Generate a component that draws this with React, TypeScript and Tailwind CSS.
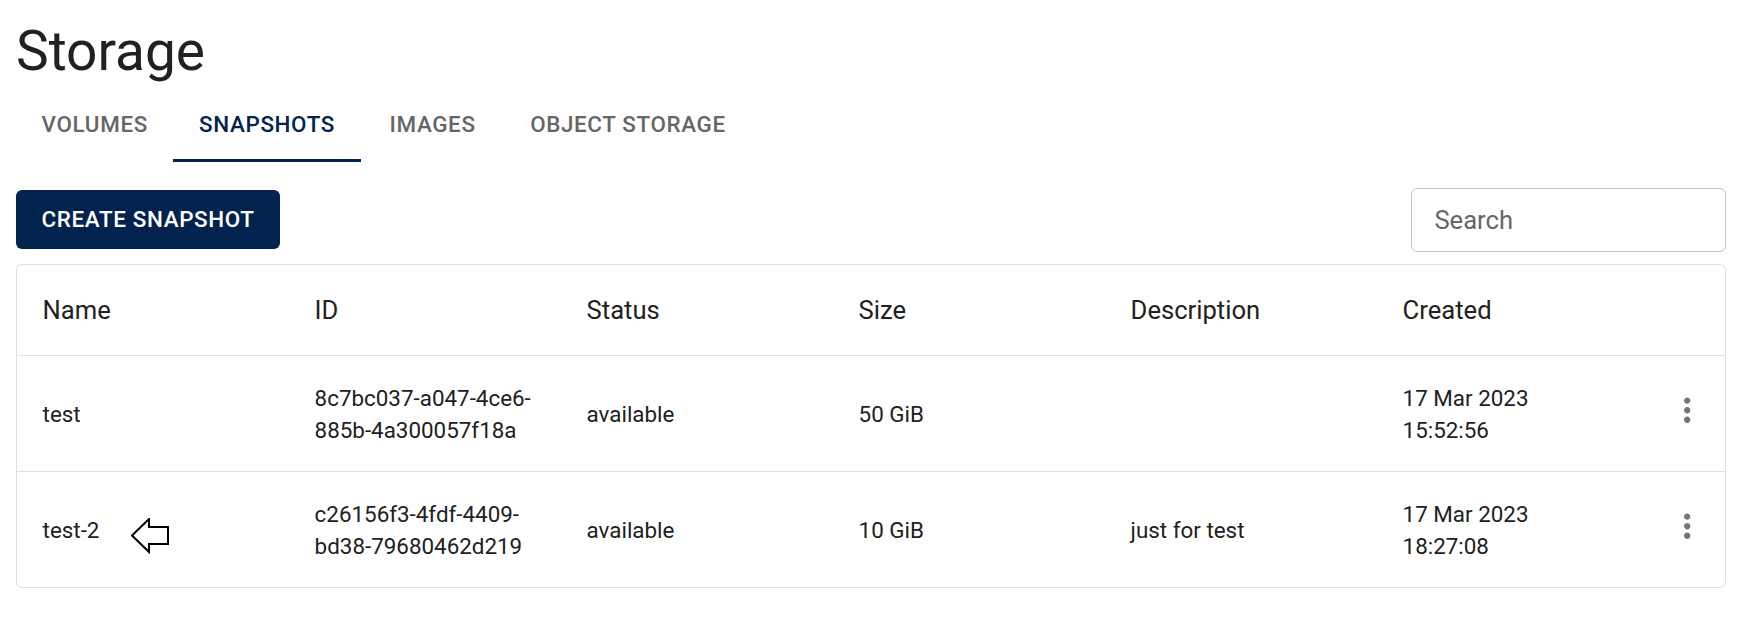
import React, { useState } from 'react';

type Snapshot = {
  name: string;
  id: [string, string];
  status: string;
  size: string;
  description: string;
  created: [string, string];
  marked?: boolean;
};

const tabs = ['Volumes', 'Snapshots', 'Images', 'Object Storage'];

const snapshots: Snapshot[] = [
  {
    name: 'test',
    id: ['8c7bc037-a047-4ce6-', '885b-4a300057f18a'],
    status: 'available',
    size: '50 GiB',
    description: '',
    created: ['17 Mar 2023', '15:52:56'],
  },
  {
    name: 'test-2',
    id: ['c26156f3-4fdf-4409-', 'bd38-79680462d219'],
    status: 'available',
    size: '10 GiB',
    description: 'just for test',
    created: ['17 Mar 2023', '18:27:08'],
    marked: true,
  },
];

function MoreVertIcon() {
  return (
    <svg viewBox="0 0 24 24" className="w-[38.4px] h-[38.4px] fill-[#757575]">
      <path d="M12 8c1.1 0 2-.9 2-2s-.9-2-2-2-2 .9-2 2 .9 2 2 2zm0 2c-1.1 0-2 .9-2 2s.9 2 2 2 2-.9 2-2-.9-2-2-2zm0 6c-1.1 0-2 .9-2 2s.9 2 2 2 2-.9 2-2-.9-2-2-2z" />
    </svg>
  );
}

function OutlineArrow() {
  return (
    <svg viewBox="0 0 38 36" className="w-[38px] h-[36px] ml-[32px] mt-[12px]">
      <polygon
        points="1,17.5 18,1 18,9 37,9 37,26 18,26 18,34"
        fill="white"
        stroke="black"
        strokeWidth="2"
        strokeLinejoin="miter"
      />
    </svg>
  );
}

export default function App() {
  const [activeTab, setActiveTab] = useState<number>(1);
  const [query, setQuery] = useState<string>('');

  const cell = 'px-[25.6px] py-[25.6px] text-[22.4px] leading-[32px] text-left align-middle';

  return (
    <div className="min-h-screen bg-white pl-4 pr-[14px] pt-[18px] font-['Roboto',sans-serif] text-[#212121]">
      <h1 className="text-[55px] leading-[67.2px] font-normal">Storage</h1>

      {/* Tabs */}
      <div className="flex h-[76.8px]">
        {tabs.map((tab, i) => (
          <button
            key={tab}
            onClick={() => setActiveTab(i)}
            className={`relative flex items-center justify-center min-w-[144px] px-[25.6px] text-[22.4px] leading-[28px] font-medium uppercase tracking-[0.02857em]
              ${i === activeTab ? 'text-[#03234f]' : 'text-[#666666]'}`}
          >
            {tab}
            {i === activeTab && (
              <span className="absolute left-0 right-0 bottom-0 h-[3px] bg-[#03234f]" />
            )}
          </button>
        ))}
      </div>

      {/* Toolbar */}
      <div className="mt-[25.6px] flex items-center justify-between">
        <button className="h-[58.4px] px-[25.6px] rounded-[6px] bg-[#03234f] text-white text-[22.4px] font-medium uppercase tracking-[0.02857em]">
          Create snapshot
        </button>
        <input
          value={query}
          onChange={(e) => setQuery(e.target.value)}
          placeholder="Search"
          className="w-[315px] h-[64px] rounded-[6px] border border-[#c4c4c4] px-[22.4px] text-[25.6px] text-[#212121] outline-none placeholder:text-[#666666]"
        />
      </div>

      {/* Table */}
      <div className="mt-[12.8px] rounded-[6px] border border-[#e0e0e0] overflow-hidden">
        <table className="w-full table-fixed border-collapse">
          <thead>
            <tr className="border-b border-[#e0e0e0]">
              {['Name', 'ID', 'Status', 'Size', 'Description', 'Created'].map((h) => (
                <th key={h} className="w-[272px] px-[25.6px] py-[25.6px] text-[25.6px] leading-[38.4px] font-normal text-left">
                  {h}
                </th>
              ))}
              <th />
            </tr>
          </thead>
          <tbody>
            {snapshots.map((s, i) => (
              <tr key={s.name} className={i < snapshots.length - 1 ? 'border-b border-[#e0e0e0]' : ''}>
                <td className={cell}>
                  <div className="flex items-center">
                    <span>{s.name}</span>
                    {s.marked && <OutlineArrow />}
                  </div>
                </td>
                <td className={cell}>
                  <div className="whitespace-nowrap">{s.id[0]}</div>
                  <div className="whitespace-nowrap">{s.id[1]}</div>
                </td>
                <td className={cell}>{s.status}</td>
                <td className={cell}>{s.size}</td>
                <td className={cell}>{s.description}</td>
                <td className={cell}>
                  <div>{s.created[0]}</div>
                  <div>{s.created[1]}</div>
                </td>
                <td className="text-center align-middle">
                  <button className="inline-flex items-center justify-center">
                    <MoreVertIcon />
                  </button>
                </td>
              </tr>
            ))}
          </tbody>
        </table>
      </div>
    </div>
  );
}
